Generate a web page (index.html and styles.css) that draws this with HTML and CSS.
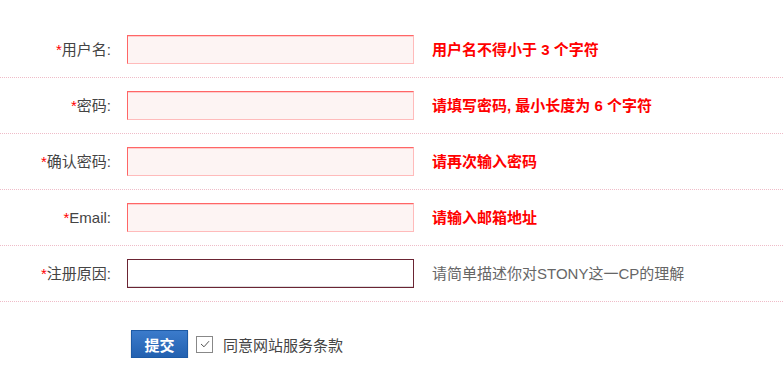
FILE: index.html
```html
<!DOCTYPE html>
<html lang="zh-CN">

<head>
    <meta charset="UTF-8">
    <meta name="viewport" content="width=device-width, initial-scale=1.0">
    <title>注册</title>
    <link rel="stylesheet" href="styles.css">
</head>

<body>
    <form class="reg-form">
        <div class="row">
            <label class="field-label" for="username"><em>*</em>用户名:</label>
            <input class="field error" id="username" type="text">
            <span class="msg msg-error">用户名不得小于 3 个字符</span>
        </div>
        <div class="row">
            <label class="field-label" for="password"><em>*</em>密码:</label>
            <input class="field error" id="password" type="password">
            <span class="msg msg-error">请填写密码, 最小长度为 6 个字符</span>
        </div>
        <div class="row">
            <label class="field-label" for="confirm"><em>*</em>确认密码:</label>
            <input class="field error" id="confirm" type="password">
            <span class="msg msg-error">请再次输入密码</span>
        </div>
        <div class="row">
            <label class="field-label" for="email"><em>*</em>Email:</label>
            <input class="field error" id="email" type="text">
            <span class="msg msg-error">请输入邮箱地址</span>
        </div>
        <div class="row">
            <label class="field-label" for="reason"><em>*</em>注册原因:</label>
            <input class="field focus" id="reason" type="text">
            <span class="msg msg-hint">请简单描述你对STONY这一CP的理解</span>
        </div>

        <div class="actions">
            <button class="submit" type="button">提交</button>
            <label class="agree">
                <span class="check">
                    <svg width="10" height="8" viewBox="0 0 10 8"><path d="M1 4 L4 6.8 L9 1.2" fill="none" stroke="#555" stroke-width="1"/></svg>
                </span>
                同意网站服务条款
            </label>
        </div>
    </form>
</body>

</html>
```

FILE: styles.css
```css
/* Basic Style */
body {
    margin: 0;
    background: #fff;
    color: #333;
    font-family: "Liberation Sans", "Noto Sans CJK SC", sans-serif;
    font-size: 15px;
}

.reg-form {
    padding-top: 22px;
}

/* Rows */
.row {
    display: flex;
    align-items: center;
    padding: 13px 0;
    border-bottom: 1px dotted #efbcc8;
}

.field-label {
    width: 111px;
    padding-right: 16px;
    text-align: right;
    color: #444;
    line-height: 20px;
}

.field-label em {
    font-style: normal;
    color: #f00;
}

.field {
    box-sizing: border-box;
    width: 287px;
    height: 29px;
    margin: 0;
    padding: 0 6px;
    outline: none;
    font-size: 14px;
}

.field.error {
    background: #fdf4f3;
    border: 1px solid;
    border-color: #f66 #fbb #fbb #f66;
    box-shadow: inset 0 1px 0 #fcc;
}

.field.focus {
    background: #fff;
    border: 1px solid #6b2433;
    box-shadow: inset 0 -1px 0 #ddd;
}

.msg {
    margin-left: 18px;
    line-height: 20px;
}

.msg-error {
    color: #f00;
    font-weight: 700;
}

.msg-hint {
    color: #666;
}

/* Submit */
.actions {
    display: flex;
    align-items: center;
    padding: 28px 0 0 131px;
}

.submit {
    width: 57px;
    height: 28px;
    border: 1px solid #1d5aa5;
    background: linear-gradient(#3b7bcb, #2361b0);
    box-shadow: 0 1px 1px #aaa;
    color: #fff;
    font-family: inherit;
    font-size: 15px;
    font-weight: 700;
    cursor: pointer;
}

.agree {
    display: flex;
    align-items: center;
    margin-left: 8px;
    color: #444;
    font-size: 15px;
}

.check {
    display: flex;
    align-items: center;
    justify-content: center;
    box-sizing: border-box;
    width: 17px;
    height: 17px;
    margin-right: 10px;
    border: 1px solid #888;
    background: #fff;
}
```
